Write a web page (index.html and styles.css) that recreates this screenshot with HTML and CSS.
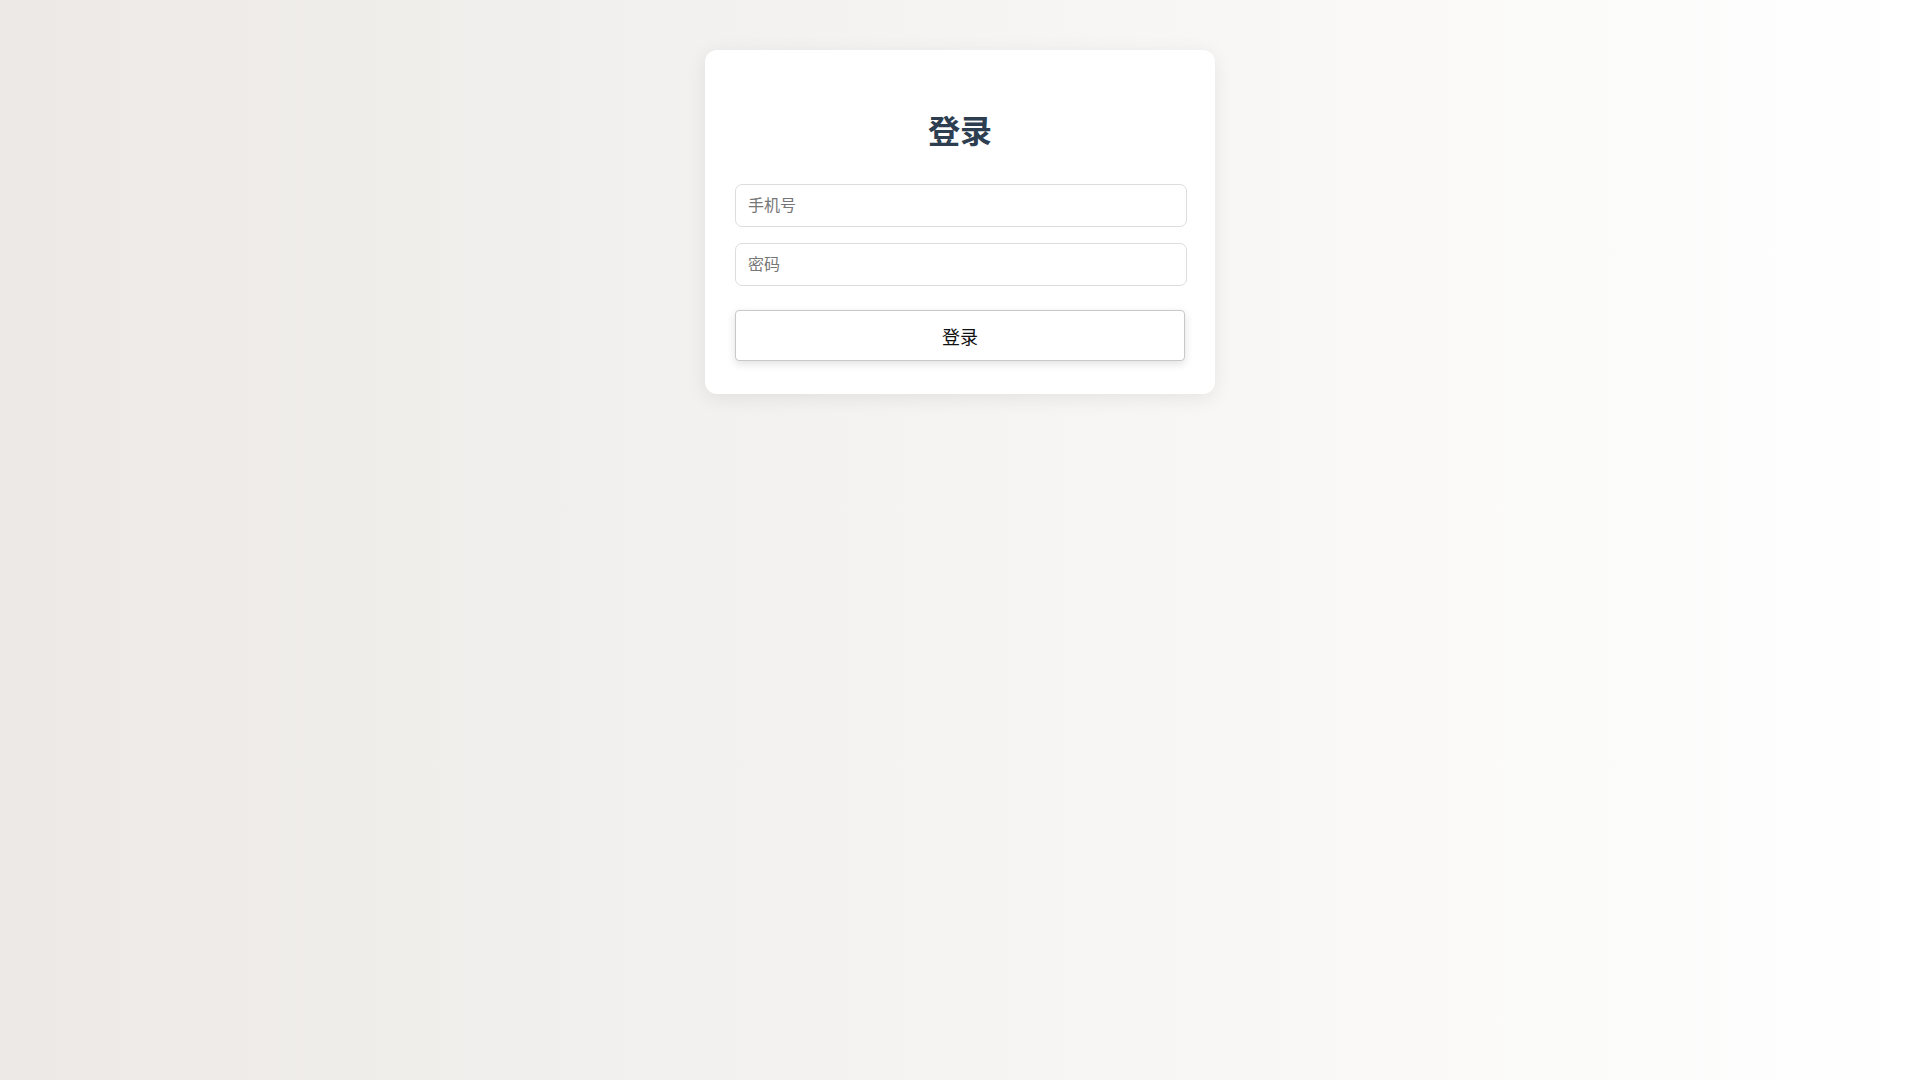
FILE: index.html
```html
<!DOCTYPE html>
<html lang="zh-CN">
<head>
<meta charset="UTF-8">
<title>登录</title>
<link rel="stylesheet" href="styles.css">
</head>
<body>
<div class="login-card">
  <h1 class="login-title">登录</h1>
  <form class="login-form">
    <input class="login-input" type="text" placeholder="手机号">
    <input class="login-input" type="password" placeholder="密码">
    <button class="login-button" type="button">登录</button>
  </form>
</div>
</body>
</html>
```
FILE: styles.css
```css
html, body {
  margin: 0;
  padding: 0;
  min-height: 100vh;
}
body {
  background: linear-gradient(to right, #ece9e6, #ffffff);
  font-family: "Noto Sans CJK SC", "Noto Sans", sans-serif;
  padding-top: 50px;
  box-sizing: border-box;
}
.login-card {
  width: 510px;
  box-sizing: border-box;
  margin: 0 auto;
  background: #ffffff;
  border-radius: 12px;
  box-shadow: 0 4px 20px rgba(0, 0, 0, 0.08);
  padding: 30px 30px 33px 30px;
}
.login-title {
  margin: 26px 0 32px;
  text-align: center;
  font-size: 32px;
  font-weight: 700;
  color: #2c3e50;
  line-height: 46px;
}
.login-form {
  display: flex;
  flex-direction: column;
}
.login-input {
  width: 452px;
  height: 43px;
  box-sizing: border-box;
  padding: 0 12px 3px;
  border: 1px solid #dddddd;
  border-radius: 7px;
  font-family: "Noto Sans CJK SC", "Noto Sans", sans-serif;
  font-size: 16px;
  color: #333;
  background: #ffffff;
  margin-bottom: 16px;
  outline: none;
}
.login-input::placeholder {
  color: #767676;
}
.login-input:last-of-type {
  margin-bottom: 24px;
}
.login-button {
  width: 450px;
  height: 51px;
  box-sizing: border-box;
  border: 1px solid #c8c8c8;
  border-radius: 4px;
  background: #ffffff;
  box-shadow: 0 3px 10px rgba(0, 0, 0, 0.12);
  font-family: "Noto Sans CJK SC", "Noto Sans", sans-serif;
  font-size: 18px;
  color: #111;
  cursor: pointer;
}
```
